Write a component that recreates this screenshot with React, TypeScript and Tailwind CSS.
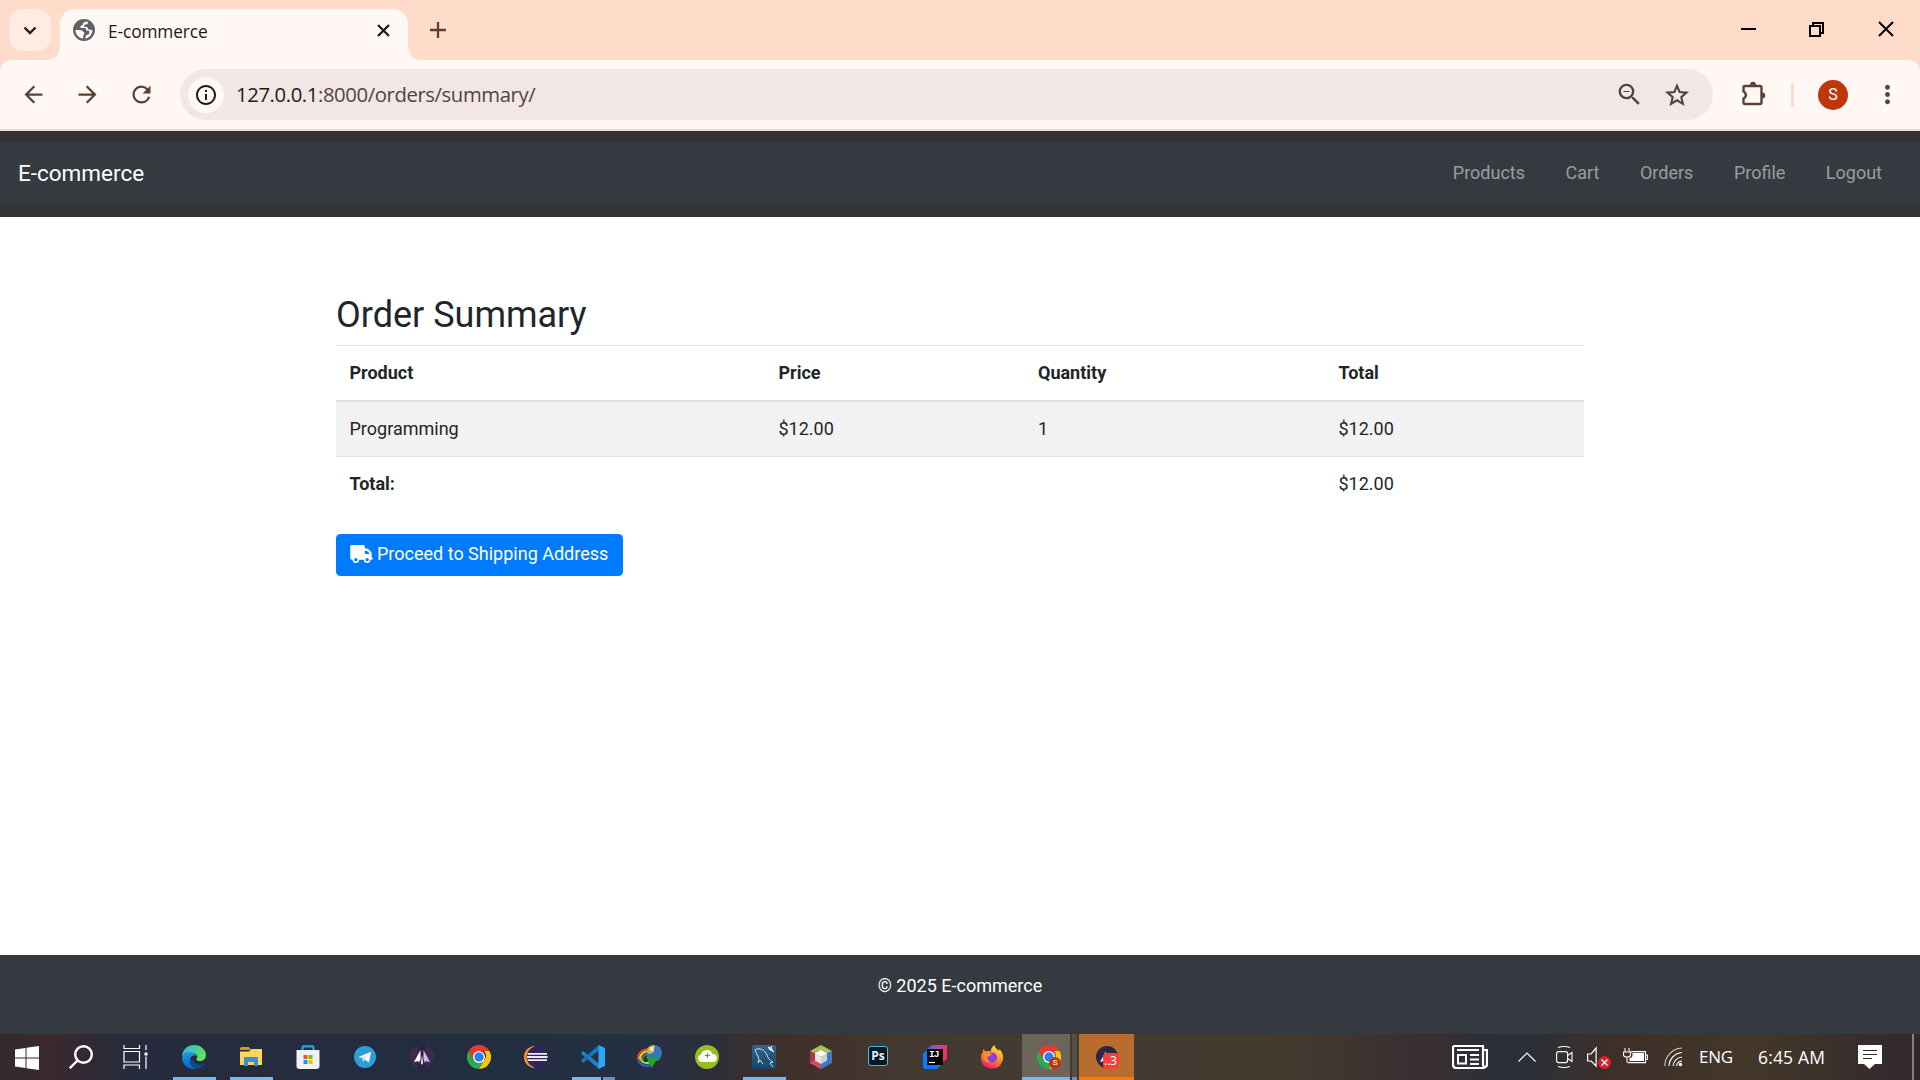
import type { ReactNode } from "react";
import { MdArrowBack, MdArrowForward, MdRefresh, MdOutlineZoomOut, MdOutlineInfo, MdMoreVert } from "react-icons/md";
import { FaTruck } from "react-icons/fa6";

const segoe = "font-['Open_Sans','Noto_Sans',sans-serif]";

function Globe() {
  return (
    <svg width="22" height="22" viewBox="0 0 22 22">
      <circle cx="11" cy="11" r="11" fill="#5f6368" />
      <path d="M13 2.600 10.500 3.500 9.500 6 7 7.500 8 9h4.500l1 2.500 3 .5-.5 3-3 1.500-1 3a8.700 8.700 0 0 0 7.500-8.500l-4-.5-1.500-2.500h-2.500l-.5-2 3.500-1 .5-2z" fill="#fff8f5" />
      <path d="M2.400 11a8.700 8.700 0 0 0 7.600 8.600l.3-3.100 1.200-2.500-2.500-2.500L6 11z" fill="#fff8f5" />
    </svg>
  );
}

function TabStrip() {
  return (
    <div className="flex h-[60px] items-start bg-[#ffdbc9]">
      <div className="mt-[9px] ml-[9px] flex h-[42px] w-[42px] items-center justify-center rounded-[14px] bg-[#ffece4]">
        <svg width="14" height="9" viewBox="0 0 14 9" fill="none" stroke="#241a16" strokeWidth="2.400"><path d="M1.500 1.500 7 7l5.500-5.500" /></svg>
      </div>
      <svg className="mt-[45px] -ml-[6px]" width="15" height="15" viewBox="0 0 15 15"><path d="M15 15H0Q15 15 15 0z" fill="#fff8f5" /></svg>
      <div className={`mt-[9px] flex h-[51px] w-[348px] items-center rounded-t-[15px] bg-[#fff8f5] pb-[9px] ${segoe}`}>
        <span className="ml-[13px]"><Globe /></span>
        <span className="ml-[13px] pt-1 text-[17.300px] tracking-[-0.100px] text-[#241a16]">E-commerce</span>
        <svg className="mr-[18px] ml-auto" width="13" height="13" viewBox="0 0 13 13" stroke="#241a16" strokeWidth="2.300"><path d="m1 1 11 11M12 1 1 12" /></svg>
      </div>
      <svg className="mt-[45px]" width="15" height="15" viewBox="0 0 15 15"><path d="M0 15h15Q0 15 0 0z" fill="#fff8f5" /></svg>
      <svg className="mt-[22px] ml-[7px]" width="16" height="16" viewBox="0 0 16 16" stroke="#5d4033" strokeWidth="2.300"><path d="M8 0v16M0 8h16" /></svg>
      <div className="mt-[21px] mr-[26px] ml-auto flex items-center gap-[53px]">
        <svg width="16" height="16" viewBox="0 0 16 16" stroke="#000" strokeWidth="2"><path d="M0 8h15" /></svg>
        <svg className="-ml-px" width="16" height="16" viewBox="0 0 16 16" fill="none" stroke="#000" strokeWidth="2"><path d="M1 5h10v10H1zM4 5V2h10v10h-3" /></svg>
        <svg width="16" height="16" viewBox="0 0 16 16" stroke="#000" strokeWidth="2"><path d="m1 1 14 14M15 1 1 15" /></svg>
      </div>
    </div>
  );
}

function Toolbar() {
  return (
    <div className="bg-[#ffdbc9]">
      <div className="flex h-[71px] items-center rounded-t-[12px] border-b-2 border-[#f5dcd2] bg-[#fff8f5] text-[#5d4033]">
        <div className="flex gap-[27px] pl-[19.500px]">
          <MdArrowBack size={27} /><MdArrowForward size={27} /><MdRefresh size={27} />
        </div>
        <div className={`ml-[25.500px] flex h-[51px] w-[1533px] items-center rounded-full bg-[#f2e7e4] text-[#52443e] ${segoe}`}>
          <span className="ml-[8px] flex h-9 w-9 items-center justify-center rounded-full bg-[#fff8f5] text-[#241a16]"><MdOutlineInfo size={24} /></span>
          <span className="ml-[12px] text-[20.300px] tracking-[-0.4px]"><span className="text-[#241a16]">127.0.0.1</span>:8000/orders/summary/</span>
          <MdOutlineZoomOut className="ml-auto" size={29} />
          <svg className="mr-[24px] ml-[21px]" width="24" height="24" viewBox="0 0 24 24">
            <path d="M12 2.800 14.600 9l6.900.6-5.200 4.500 1.600 6.700L12 17.300l-5.900 3.500 1.600-6.700-5.200-4.500L9.400 9z" fill="none" stroke="#52443e" strokeWidth="2.100" />
          </svg>
        </div>
        <svg className="-mt-[2px] ml-[28px]" width="26" height="26" viewBox="0 0 26 26">
          <path d="M4 5h15a1.500 1.500 0 0 1 1.500 1.500v15A1.500 1.500 0 0 1 19 23H4a1.500 1.500 0 0 1-1.500-1.500V17.500a3.800 3.800 0 0 0 0-7V6.500A1.500 1.500 0 0 1 4 5z" fill="none" stroke="#5d4033" strokeWidth="2.400" />
          <path d="M9 4a3 3.300 0 0 1 6 0zM21 11.500a3.300 3 0 0 1 0 6z" fill="#5d4033" />
        </svg>
        <span className="ml-[24px] h-6 w-[3px] rounded bg-[#ffdbc9]" />
        <span className="ml-[24px] flex h-[30px] w-[30px] items-center justify-center rounded-full bg-[#bf360c] font-['Roboto',sans-serif] text-base text-white">S</span>
        <MdMoreVert className="ml-[24.500px]" size={29} />
      </div>
    </div>
  );
}

function SiteNav() {
  const links = ["Products", "Cart", "Orders", "Profile", "Logout"];
  return (
    <header className="h-[86px] bg-[#333] pt-[11px]">
      <nav className="flex h-[63px] items-center justify-between bg-[#343a40] pr-[38px] pl-[18px]">
        <span className="text-[22.500px] text-white">E-commerce</span>
        <div className="flex gap-[40.500px] pb-[2px] text-lg text-white/50">
          {links.map((l) => <span key={l}>{l}</span>)}
        </div>
      </nav>
    </header>
  );
}

function Summary() {
  const cols = "grid grid-cols-[429px_259.500px_300.500px_259px] items-center";
  return (
    <main className="mx-auto h-[738px] w-[1248px] pt-[77px] text-lg text-[#212529]">
      <h2 className="text-[36px] leading-[43px]">Order Summary</h2>
      <div className="mt-[8px] border-t border-[#dee2e6]">
        <div className={`${cols} h-[56px] border-b-2 border-[#dee2e6] font-bold`}>
          {["Product", "Price", "Quantity", "Total"].map((h) => <span key={h} className="pl-[13.500px]">{h}</span>)}
        </div>
        <div className={`${cols} h-[54px] bg-[#f2f2f2]`}>
          {["Programming", "$12.00", "1", "$12.00"].map((v, i) => <span key={i} className="pl-[13.500px]">{v}</span>)}
        </div>
        <div className={`${cols} h-[55px] border-t border-[#dee2e6]`}>
          <span className="pl-[13.500px] font-bold">Total:</span><span /><span />
          <span className="pl-[13.500px]">$12.00</span>
        </div>
      </div>
      <button className="mt-[23px] flex h-[42px] w-[287px] items-center rounded-[4.500px] bg-[#007bff] pb-0.5 pl-[14px] text-white">
        <FaTruck className="h-[18px] w-[23px]" />
        <span className="ml-[4px] whitespace-nowrap">Proceed to Shipping Address</span>
      </button>
    </main>
  );
}

const Edge = () => (
  <svg width="24" height="24" viewBox="0 0 24 24">
    <defs>
      <linearGradient id="eg" x1="0" x2="1" y1="0" y2=".5"><stop stopColor="#2fb1e8" /><stop offset="1" stopColor="#5fe35a" /></linearGradient>
      <linearGradient id="eb" x1="0" x2="0" y1="0" y2="1"><stop stopColor="#1b9de2" /><stop offset="1" stopColor="#0b62c4" /></linearGradient>
    </defs>
    <path d="M0 11C1 3 7 0 12 0c7 0 12 5 12 10 0 4-3 6-6 6-4 0-4-2-3-3 1-3-1-5-5-5-4 0-8 1-10 3z" fill="url(#eg)" />
    <path d="M0 12c1-4 5-6 9-5 3 .5 5 2 6 4-3-2-7 0-7 5 0 4 3 7 7 7.500C7 26 0 20 0 12z" fill="url(#eb)" />
    <path d="M8 14c-1 6 3 9.500 7.500 9.500 3.500-.5 6-2.500 7.500-5-5 2.500-11 1-12-3.500z" fill="#114a8b" />
  </svg>
);

const Explorer = () => (
  <svg width="22" height="20" viewBox="0 0 22 20">
    <path d="M0 1.500Q0 0 1.500 0H9l2 3H0z" fill="#d89b0c" />
    <path d="M0 4.500h9L11.500 2H22v16H0z" fill="#ffd45e" />
    <path d="M4 19v-8q0-1 1-1h12q1 0 1 1v8h-4v-4H8v4z" fill="#3a8ede" />
  </svg>
);

const Store = () => (
  <svg width="24" height="24" viewBox="0 0 24 24">
    <path d="M6.500 6V2.200Q6.500 1.300 7.500 1.300h9q1 0 1 .9V6" fill="none" stroke="#23a7e8" strokeWidth="2.200" />
    <path d="M.5 5h23v16q0 3-3 3h-17q-3 0-3-3z" fill="#f1f1f1" />
    <path d="M7.500 10h4v4h-4z" fill="#f25022" /><path d="M12.500 10h4v4h-4z" fill="#7fba00" />
    <path d="M7.500 15h4v4h-4z" fill="#00a4ef" /><path d="M12.500 15h4v4h-4z" fill="#ffb900" />
  </svg>
);

const Telegram = () => (
  <svg width="22" height="22" viewBox="0 0 22 22">
    <circle cx="11" cy="11" r="11" fill="#2a9fd8" />
    <path d="M4 11.200 17 5.800 15 16.500l-4-2.800-2 2-.5-3.700z" fill="#fff" /><path d="m8.500 12 6-4-4 4.800L9 15.500z" fill="#b9d8ec" />
  </svg>
);

const Peaks = () => (
  <svg width="24" height="24" viewBox="0 0 24 24">
    <circle cx="12" cy="12" r="12" fill="#3b2c4c" /><path d="M8 0h8v24H8z" fill="#2f2440" />
    <path d="M10.500 5v9L9 18l-.5-2L4 17z" fill="#fff" /><path d="M13.500 5 20 17l-4-1-1 2-1.500-4z" fill="#c9b8fa" />
    <path d="m12 10 1 8-1 2-1-2z" fill="#fff" />
  </svg>
);

const Chrome = () => (
  <svg width="24" height="24" viewBox="0 0 24 24">
    <path d="M1.600 6a12 12 0 0 0 10.400 18l5.200-9L12 12 6.800 15z" fill="#2da94f" />
    <path d="M22.400 6A12 12 0 0 1 12 24l5.200-9a6 6 0 0 0-.5-9z" fill="#fdc60b" />
    <path d="M12 6h10.400A12 12 0 0 0 1.600 6l5.200 9z" fill="#e33b2e" />
    <circle cx="12" cy="12" r="6" fill="#fff" /><circle cx="12" cy="12" r="4.700" fill="#2f7df0" />
  </svg>
);

const Eclipse = () => (
  <svg width="24" height="24" viewBox="0 0 24 24">
    <path d="M10.500 1a11.200 11.200 0 0 0 0 22A14 14 0 0 1 10.500 1z" fill="#f7941e" />
    <path d="M10.500 1C3 2 0 7 0 12s3 10 10.500 11L6 18V6z" fill="#f7941e" />
    <circle cx="13.300" cy="12" r="10.700" fill="#2e2560" />
    <path d="M3.600 8.800h19.400M3 12h20.600M3.600 15.200h19.400" stroke="#eeeaf6" strokeWidth="1.800" />
  </svg>
);

const Code = () => (
  <svg width="24" height="24" viewBox="0 0 24 24">
    <path d="M0 8l2-2 16 12.500V24L1 9.500z" fill="#1c83ca" /><path d="M0 16l2 2L18 5.500V0L1 14.500z" fill="#1477bd" />
    <path d="m17.500 0 6.500 3v18l-6.500 3z" fill="#2ba7f2" />
  </svg>
);

const Idm = () => (
  <svg width="26" height="24" viewBox="0 0 26 24">
    <g fill="none">
      <path d="M11 4C3 5 0 10 1.500 15" stroke="#e2452c" strokeWidth="2" />
      <path d="M11 6C5 7 2 11 3.500 15" stroke="#f5cf25" strokeWidth="2.200" />
      <path d="M11 8.500c-4 1-6.500 4-5 7.500" stroke="#3b8f2e" strokeWidth="2" />
      <path d="M1.500 14.500C3 20 8 22 13 20" stroke="#2b63b8" strokeWidth="2.500" />
      <path d="M4 14.500c1 3 5 4 9 3" stroke="#c9d64a" strokeWidth="2" />
    </g>
    <circle cx="17" cy="8" r="8" fill="#3a72c4" />
    <path d="M9.200 7a8 8 0 0 1 8-7l1 2-2 2 1 2.500-2.500 2-3 .5z" fill="#c8b84e" />
    <circle cx="15" cy="4" r="2.200" fill="#f3f1d0" opacity=".8" />
    <path d="m9 11.500 15.500 2.500-5.500 2-4.500 7z" fill="#22a81e" />
  </svg>
);

const CloudPlus = () => (
  <svg width="24" height="24" viewBox="0 0 24 24">
    <circle cx="12" cy="12" r="12" fill="#93c01f" />
    <path d="M6.500 17a3.700 3.700 0 0 1-.5-7.300A6 6 0 0 1 17.500 9a4 4 0 0 1 .5 8z" fill="#fff" />
    <path d="M12.500 8v5M10 10.500h5" stroke="#6ca010" strokeWidth="1.200" />
  </svg>
);

const Dolphin = () => (
  <svg width="24" height="24" viewBox="0 0 24 24">
    <defs><linearGradient id="my" x1="0" x2="0" y1="0" y2="1"><stop stopColor="#2d6690" /><stop offset="1" stopColor="#194668" /></linearGradient></defs>
    <rect width="24" height="24" rx="2.500" fill="url(#my)" />
    <path d="M6 18q2-3 0-7C4 8 3 6 3.500 4.500 8 2.500 13 5 15 10c1 3 2 5 6 7l-3 1 3 4M6 18l2-3 3 4" fill="none" stroke="#d5e1ea" strokeWidth="1" />
    <path d="m16 2 3 1 2 3-3-1zM20 1l-1 2M22 7l-2-1" stroke="#e8f0f5" strokeWidth="1" fill="#e8f0f5" />
  </svg>
);

const Cube = () => (
  <svg width="22" height="24" viewBox="0 0 22 24">
    <path d="M11 0 22 6l-11 6L0 6z" fill="#a9bf57" /><path d="M0 6l11 6-2 7.500L11 24 0 18z" fill="#b03355" /><path d="m22 6-11 6v12l11-6z" fill="#3b79c9" />
    <path d="m0 18 5-3 6 4v5z" fill="#d9476a" />
    <path d="m11 5 6 3.500-6 3.500-6-3.500z" fill="#fbfbf6" /><path d="m5 8.500 6 3.500v7L5 15.500z" fill="#e5e8e4" /><path d="m17 8.500-6 3.500v7l6-3.500z" fill="#cbd3d5" />
  </svg>
);

const Photoshop = () => (
  <span className="mb-[3px] flex h-5 w-5 items-center justify-center rounded-[3px] border border-[#2bc6f5] bg-[#071622] font-['Open_Sans',sans-serif] text-[12px] leading-none font-bold text-[#e3f5fd]">Ps</span>
);

const Idea = () => (
  <div className="relative h-6 w-6">
    <svg width="24" height="24" viewBox="0 0 24 24">
      <defs><linearGradient id="ij" x1="0" x2="1" y1="0" y2=".5"><stop stopColor="#3b6bee" /><stop offset=".6" stopColor="#c04a93" /><stop offset="1" stopColor="#fe2857" /></linearGradient></defs>
      <path d="M9 0h15v14l-8 6H4V4z" fill="url(#ij)" /><path d="M4 5 0 9v13q0 2 2 2h12l5-5H4z" fill="#087cfa" /><path d="M4 4h16v16H4z" fill="#000" /><path d="M6 17.500h6" stroke="#fff" strokeWidth="1.200" />
    </svg>
    <span className="absolute top-[5px] left-[6px] font-['Liberation_Mono',monospace] text-[9.500px] leading-[9px] font-bold tracking-[-1px] text-white">IJ</span>
  </div>
);

const Firefox = () => (
  <svg width="24" height="24" viewBox="0 0 24 24">
    <defs><linearGradient id="ff" x1=".8" x2=".3" y1="0" y2="1"><stop stopColor="#fff04a" /><stop offset=".4" stopColor="#ffa02b" /><stop offset=".75" stopColor="#ff5038" /><stop offset="1" stopColor="#ef1676" /></linearGradient></defs>
    <path d="M3 4l2.500 2.500q3-1 5 0C11 3 13 1 14.500 0c0 3 3 4 4.500 6l.5-2C23 8 24 12 22.500 16A11 11 0 0 1 12 23.500C5 23.500 0 18 1 11q.5-3 2-4z" fill="url(#ff)" />
    <circle cx="12" cy="12.500" r="5" fill="#8a3ee0" /><path d="M3 8c3 1 6 0 9 1l-2 2-3 1q0 4 4 5-6 1-8-4z" fill="#ff8f24" />
  </svg>
);

function AppCell({ children, line }: { children: ReactNode; line?: ReactNode }) {
  return (
    <div className="flex w-[57px] flex-col items-center">
      <div className="flex h-[43px] items-center justify-center pt-[3px]">{children}</div>
      {line}
    </div>
  );
}

const runLine = <div className="h-[3px] w-[43px] bg-[#76b9ed]" />;
const splitLine = <div className="flex h-[3px] w-[43px]"><div className="w-[29px] bg-[#76b9ed]" /><div className="ml-[2px] flex-1 bg-[#6395c0]" /></div>;

function Tray() {
  return (
    <div className={`ml-auto flex items-center text-white ${segoe}`}>
      <svg width="36" height="24" viewBox="0 0 36 24" fill="none" stroke="#fff" strokeWidth="2">
        <path d="M1 1h30v18q0 3 2 3t2-3V5h-4M1 1v18q0 4 3.500 4H33" strokeWidth="2.200" /><path d="M5 5h22M18 10h9M18 14.500h9M18 19h9" /><path d="M6 10h8v8.500H6z" />
      </svg>
      <svg className="ml-[30px]" width="18" height="10" viewBox="0 0 18 10" fill="none" stroke="#fff" strokeWidth="1.200"><path d="m.5 9.500 8.500-8.500 8.500 8.500" /></svg>
      <svg className="ml-5" width="17" height="24" viewBox="0 0 17 24" fill="none" stroke="#fff" strokeWidth="1.100"><rect x=".6" y="6.600" width="11" height="11" rx="2" /><path d="m11.500 10.500 4.500-3v9l-4.500-3M2 2.500Q8 .5 14 2.500M2 21.500q6 2 12 0" /></svg>
      <svg className="ml-[14px]" width="25" height="24" viewBox="0 0 25 24"><path d="M.6 9h3.500l5-6v18l-5-5H.6z" fill="none" stroke="#fff" strokeWidth="1.200" /><circle cx="17.500" cy="17.500" r="6.500" fill="#e01f2b" /><path d="m14.500 14.500 6 6M20.500 14.500l-6 6" stroke="#fff" strokeWidth="1.300" /></svg>
      <svg className="ml-[11px]" width="25" height="20" viewBox="0 0 25 20" fill="none" stroke="#fff" strokeWidth="1.100"><path d="M2 1v4M6 1v4M.5 5h7v3q0 2-3.500 2T.5 8zM4 10v5h1" /><path d="M8 4.600h14.500v11H5M23 8h1.400v4.500H23" /><path d="M9.500 6h11.500v8H6.500v-3q3 0 3-3z" fill="#fff" stroke="none" /></svg>
      <svg className="ml-4" width="19" height="20" viewBox="0 0 19 20" fill="none" stroke="#fff" strokeWidth="1.100"><path d="M.8 19A18 18 0 0 1 18 1" opacity=".75" /><path d="M5 19A14 14 0 0 1 18 5.500M9 19A10 10 0 0 1 18 10M12.500 19A6 6 0 0 1 18 14" /><circle cx="16.500" cy="17.500" r="1.700" fill="#fff" stroke="none" /></svg>
      <span className="ml-[16px] w-[59px] text-[17px] tracking-[-0.200px]">ENG</span>
      <span className="w-[100px] text-[17.500px] tracking-[0.150px] whitespace-nowrap">6:45 AM</span>
      <svg width="24" height="24" viewBox="0 0 24 24"><path d="M0 0h24v19h-7l-5.500 5L6 19H0z" fill="#fff" /><path d="M5 5.500h14M5 9.500h14M5 13.500h9" stroke="#33302c" strokeWidth="1.100" /></svg>
      <span className="mr-[6px] ml-[30px] h-[46px] w-[2px] bg-[#85807d]" />
    </div>
  );
}

function Taskbar() {
  return (
    <div className="flex h-[46px] bg-[linear-gradient(90deg,#33292d_0px,#3a292d_50px,#252b3c_130px,#232d40_480px,#243042_640px,#2b2f3a_700px,#402f2a_790px,#433930_900px,#423b31_1150px,#44392f_1300px,#382e32_1430px,#29303a_1520px,#3d2f29_1610px,#433729_1760px,#382d2c_1860px,#30282d_1920px)]">
      <div className="flex w-[54px] items-center justify-center">
        <svg className="mt-[1px]" width="24" height="24" viewBox="0 0 24 24" fill="#fff"><path d="M0 3.500 10.500 2v9.500H0zM11.500 1.800 24 0v11.500H11.500zM0 12.500h10.500V22L0 20.500zM11.500 12.500H24V24l-12.500-1.800z" /></svg>
      </div>
      <div className="flex w-[54px] items-center justify-center">
        <svg width="24" height="24" viewBox="0 0 24 24" fill="none" stroke="#fff" strokeWidth="2.400"><circle cx="14.500" cy="9.500" r="8.300" /><path d="M8.500 15.500.8 23.200" /></svg>
      </div>
      <div className="mr-[3.500px] flex w-[54px] items-center justify-center">
        <svg width="25" height="24" viewBox="0 0 25 24" fill="none" stroke="#fff" strokeWidth="1.200"><path d="M1 0v3.500h15.500V0M1 6.500h15.500v10.500H1zM1 24v-4h15.500v4M23 0v5M23 11.500V24" /><path d="M21.500 7.500h3v3h-3z" fill="#fff" stroke="none" /></svg>
      </div>
      <AppCell line={runLine}><Edge /></AppCell>
      <AppCell line={runLine}><Explorer /></AppCell>
      <AppCell><Store /></AppCell>
      <AppCell><Telegram /></AppCell>
      <AppCell><Peaks /></AppCell>
      <AppCell><Chrome /></AppCell>
      <AppCell><Eclipse /></AppCell>
      <AppCell line={splitLine}><Code /></AppCell>
      <AppCell><Idm /></AppCell>
      <AppCell><CloudPlus /></AppCell>
      <AppCell line={runLine}><Dolphin /></AppCell>
      <AppCell><Cube /></AppCell>
      <AppCell><Photoshop /></AppCell>
      <AppCell><Idea /></AppCell>
      <AppCell><Firefox /></AppCell>
      <div className="ml-[1.500px] flex w-[48px] flex-col bg-[#6b655b]">
        <div className="flex h-[43px] items-center justify-center pt-[3px] pl-[6px]">
          <div className="relative">
            <Chrome />
            <span className="absolute top-[12px] left-[12px] flex h-3 w-3 items-center justify-center rounded-full bg-[#bf360c] font-['Roboto',sans-serif] text-[8px] text-white">S</span>
          </div>
        </div>
        <div className="h-[3px] bg-[#76b9ed]" />
      </div>
      <div className="ml-[2px] flex w-[5px] flex-col justify-end bg-[#555046]"><div className="h-[3px] bg-[#6395c0]" /></div>
      <div className="ml-[2px] flex w-[55px] flex-col bg-[#b86c2d]">
        <div className="flex h-[43px] items-center justify-center pt-[2px]">
          <div className="relative h-[22px] w-[22px] rounded-full bg-[#2c2546]">
            <svg width="22" height="22" viewBox="0 0 22 22"><path d="m10 5-6 11 4-1z" fill="#fff" /></svg>
            <span className="absolute top-[7px] left-[7px] flex h-4 w-4 items-center justify-center rounded-[4px] bg-[#f6403a] font-['Open_Sans',sans-serif] text-[12px] tracking-[-0.200px] text-white">..3</span>
          </div>
        </div>
        <div className="h-[3px] bg-[#ff7a00]" />
      </div>
      <Tray />
    </div>
  );
}

export default function App() {
  return (
    <div className="h-[1080px] w-[1920px] overflow-hidden bg-white font-['Roboto',sans-serif]">
      <TabStrip />
      <Toolbar />
      <SiteNav />
      <Summary />
      <footer className="h-[79px] bg-[#343a40] pt-[17px] text-center text-lg text-white">© 2025 E-commerce</footer>
      <Taskbar />
    </div>
  );
}
